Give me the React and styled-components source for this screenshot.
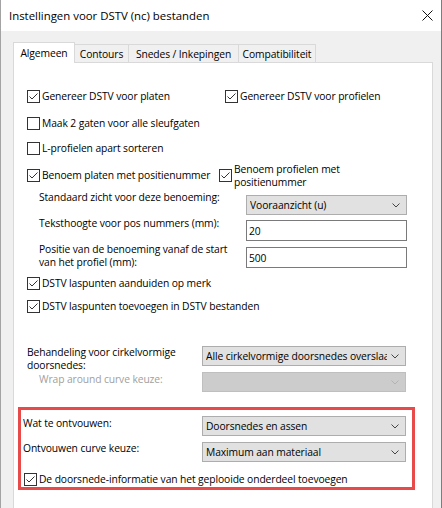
import React from "react";
import styled, { createGlobalStyle } from "styled-components";

const GlobalStyle = createGlobalStyle`
  html, body {
    margin: 0;
    padding: 0;
    background: #f0f0f0;
  }
  body {
    font-family: "Open Sans", "Noto Sans", sans-serif;
    font-size: 10.3px;
    letter-spacing: -0.1px;
    color: #000;
  }
  * {
    box-sizing: border-box;
  }
`;

const Window = styled.div`
  width: 442px;
  height: 508px;
  display: flex;
  flex-direction: column;
  background: #f0f0f0;
  border-left: 1px solid #a3a3a3;
  border-right: 1px solid #7d7d7d;
  overflow: hidden;
`;

const TitleBar = styled.div`
  height: 31px;
  flex: none;
  display: flex;
  align-items: center;
  justify-content: space-between;
  padding: 0 8px;
  background: #fff;
`;

const Title = styled.span`
  font-size: 11.4px;
  letter-spacing: 0;
`;

const Body = styled.div`
  flex: 1;
  display: flex;
  flex-direction: column;
  padding: 11px 8px 0 12px;
`;

const TabStrip = styled.div`
  display: flex;
  align-items: flex-end;
  height: 21px;
  margin-bottom: -1px;
  position: relative;
  z-index: 1;
`;

const Tab = styled.div`
  width: ${(p) => p.$w}px;
  height: ${(p) => (p.$active ? 21 : 18)}px;
  margin-bottom: ${(p) => (p.$active ? 0 : 1)}px;
  margin-left: ${(p) => (p.$first ? 0 : -1)}px;
  display: flex;
  align-items: center;
  justify-content: center;
  border: 1px solid #d9d9d9;
  border-bottom: none;
  background: ${(p) => (p.$active ? "#fff" : "#f0f0f0")};
  position: relative;
  z-index: ${(p) => (p.$active ? 2 : 1)};
  white-space: nowrap;
`;

const Panel = styled.div`
  flex: 1;
  display: flex;
  flex-direction: column;
  padding-top: 20px;
  background: #fff;
  border: 1px solid #d9d9d9;
  border-bottom: none;
`;

const CheckRow = styled.div`
  display: flex;
  align-items: center;
  height: ${(p) => p.$h}px;
  margin-top: ${(p) => p.$mt || 0}px;
  padding-left: ${(p) => p.$indent ?? 13}px;
`;

const CheckItem = styled.label`
  display: flex;
  align-items: center;
  gap: 2px;
  flex: none;
  width: ${(p) => (p.$w ? `${p.$w}px` : "auto")};
  white-space: nowrap;
`;

const Box = styled.span`
  width: 13px;
  height: 13px;
  flex: none;
  display: flex;
  border: 1px solid #333;
  background: #fff;
`;

const CheckLabel = styled.span`
  line-height: 13px;
`;

const FieldRow = styled.div`
  display: grid;
  grid-template-columns: ${(p) => p.$label}px ${(p) => p.$ctrl}px;
  align-items: start;
  margin-top: ${(p) => p.$mt || 0}px;
  padding-left: ${(p) => p.$indent}px;
`;

const FieldLabel = styled.span`
  line-height: ${(p) => (p.$multi ? 13 : 14)}px;
  margin-top: ${(p) => p.$mt || 0}px;
  color: ${(p) => (p.$disabled ? "#a0a0a0" : "#000")};
`;

const Select = styled.div`
  height: 20px;
  margin-top: ${(p) => p.$mt || 0}px;
  display: flex;
  align-items: center;
  padding: 0 6px 0 3px;
  background: ${(p) => (p.$disabled ? "#cccccc" : "#e1e1e1")};
  border: 1px solid ${(p) => (p.$disabled ? "#bfbfbf" : "#adadad")};
  color: #000;
`;

const SelectText = styled.span`
  flex: 1;
  min-width: 0;
  margin-right: 4px;
  overflow: hidden;
  white-space: nowrap;
`;

const TextInput = styled.div`
  height: 21px;
  margin-top: ${(p) => p.$mt || 0}px;
  display: flex;
  align-items: center;
  padding-left: 2px;
  background: #fff;
  border: 1px solid #7a7a7a;
`;

const Highlight = styled.div`
  width: 397px;
  margin: 15px 0 0 4px;
  padding-top: 6px;
  border: 3px solid #e84a4a;
`;

const Check = () => (
  <Box>
    <svg width="11" height="11" viewBox="0 0 11 11">
      <path d="M1.5 5.5 L4 8 L9.5 2.5" fill="none" stroke="#333" strokeWidth="1" />
    </svg>
  </Box>
);

const Checkbox = ({ checked, children, w }) => (
  <CheckItem $w={w}>
    {checked ? <Check /> : <Box />}
    <CheckLabel>{children}</CheckLabel>
  </CheckItem>
);

const Chevron = ({ color = "#444" }) => (
  <svg width="8" height="5" viewBox="0 0 8 5">
    <path d="M0.5 0.5 L4 4 L7.5 0.5" fill="none" stroke={color} strokeWidth="1" />
  </svg>
);

const Dropdown = ({ value, disabled, mt }) => (
  <Select $disabled={disabled} $mt={mt}>
    <SelectText>{value}</SelectText>
    <Chevron color={disabled ? "#b3b3b3" : "#444"} />
  </Select>
);

const CloseIcon = () => (
  <svg width="11" height="11" viewBox="0 0 11 11">
    <path d="M0.5 0.5 L10.5 10.5 M10.5 0.5 L0.5 10.5" stroke="#111" strokeWidth="1" />
  </svg>
);

const tabs = [
  { name: "Algemeen", w: 62 },
  { name: "Contours", w: 55 },
  { name: "Snedes / Inkepingen", w: 111 },
  { name: "Compatibiliteit", w: 78 },
];

export default function App() {
  return (
    <>
      <GlobalStyle />
      <Window>
        <TitleBar>
          <Title>Instellingen voor DSTV (nc) bestanden</Title>
          <CloseIcon />
        </TitleBar>
        <Body>
          <TabStrip>
            {tabs.map((t, i) => (
              <Tab key={t.name} $w={t.w} $first={i === 0} $active={i === 0}>
                {t.name}
              </Tab>
            ))}
          </TabStrip>
          <Panel>
            <CheckRow $h={27}>
              <Checkbox checked w={198}>Genereer DSTV voor platen</Checkbox>
              <Checkbox checked>Genereer DSTV voor profielen</Checkbox>
            </CheckRow>
            <CheckRow $h={26}>
              <Checkbox>Maak 2 gaten voor alle sleufgaten</Checkbox>
            </CheckRow>
            <CheckRow $h={25}>
              <Checkbox>L-profielen apart sorteren</Checkbox>
            </CheckRow>
            <CheckRow $h={29}>
              <Checkbox checked w={192}>Benoem platen met positienummer</Checkbox>
              <Checkbox checked>
                Benoem profielen met
                <br />
                positienummer
              </Checkbox>
            </CheckRow>

            <FieldRow $indent={25} $label={207} $ctrl={161}>
              <FieldLabel>Standaard zicht voor deze benoeming:</FieldLabel>
              <Dropdown value="Vooraanzicht (u)" mt={5} />
            </FieldRow>
            <FieldRow $indent={25} $label={207} $ctrl={161}>
              <FieldLabel $mt={1}>Teksthoogte voor pos nummers (mm):</FieldLabel>
              <TextInput $mt={5}>20</TextInput>
            </FieldRow>
            <FieldRow $indent={25} $label={207} $ctrl={161}>
              <FieldLabel $multi $mt={2}>
                Positie van de benoeming vanaf de start
                <br />
                van het profiel (mm):
              </FieldLabel>
              <TextInput $mt={6}>500</TextInput>
            </FieldRow>

            <CheckRow $h={26} $mt={1}>
              <Checkbox checked>DSTV laspunten aanduiden op merk</Checkbox>
            </CheckRow>
            <CheckRow $h={20}>
              <Checkbox checked>DSTV laspunten toevoegen in DSTV bestanden</Checkbox>
            </CheckRow>

            <FieldRow $mt={30} $indent={13} $label={175} $ctrl={204}>
              <FieldLabel $multi>
                Behandeling voor cirkelvormige
                <br />
                doorsnedes:
              </FieldLabel>
              <Dropdown value="Alle cirkelvormige doorsnedes overslaan" />
            </FieldRow>
            <FieldRow $indent={25} $label={163} $ctrl={204}>
              <FieldLabel $disabled>Wrap around curve keuze:</FieldLabel>
              <Dropdown value="" disabled />
            </FieldRow>

            <Highlight>
              <FieldRow $indent={2} $label={179} $ctrl={204}>
                <FieldLabel>Wat te ontvouwen:</FieldLabel>
                <Dropdown value="Doorsnedes en assen" />
              </FieldRow>
              <FieldRow $mt={5} $indent={2} $label={179} $ctrl={204}>
                <FieldLabel>Ontvouwen curve keuze:</FieldLabel>
                <Dropdown value="Maximum aan materiaal" mt={1} />
              </FieldRow>
              <CheckRow $h={15} $mt={10} $indent={3}>
                <Checkbox checked>
                  De doorsnede-informatie van het geplooide onderdeel toevoegen
                </Checkbox>
              </CheckRow>
            </Highlight>
          </Panel>
        </Body>
      </Window>
    </>
  );
}
